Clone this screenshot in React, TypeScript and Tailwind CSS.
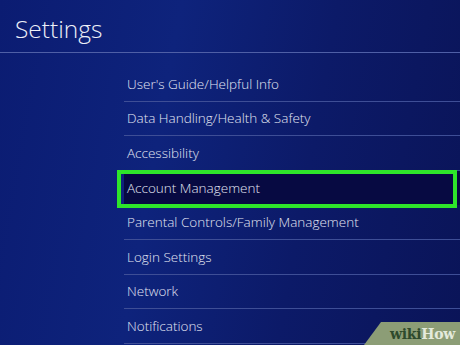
const items = [
  "User's Guide/Helpful Info",
  'Data Handling/Health & Safety',
  'Accessibility',
  'Account Management',
  'Parental Controls/Family Management',
  'Login Settings',
  'Network',
  'Notifications',
];

const selected = 'Account Management';

export default function App() {
  return (
    <div className="relative w-[460px] h-[345px] overflow-hidden bg-[linear-gradient(100deg,#0b1c72_0%,#0e237c_35%,#0c1a68_65%,#0a1458_100%)] font-['Open_Sans',sans-serif]">
      <header className="h-[53px] border-b border-[#4f5fa6] pl-[15px] pt-[14px]">
        <h1 className="text-[24.5px] leading-[30px] font-light text-[#eef0f8]">Settings</h1>
      </header>

      <ul className="ml-[124px] mt-[14px]">
        {items.map((item) => {
          const isSel = item === selected;
          return (
            <li
              key={item}
              className={`relative h-[34.6px] flex items-center pl-[3px] text-[13.5px] font-light text-[#e2e5f3] ${
                isSel ? 'bg-[#070a42]' : 'border-b border-[#3e4e96]'
              }`}
            >
              {item}
              {isSel && (
                <span className="pointer-events-none absolute -left-[7px] right-[3px] -top-[1px] -bottom-[3px] border-[4px] border-[#2ee62a]" />
              )}
            </li>
          );
        })}
      </ul>

      <div className="absolute right-0 bottom-0 w-[96px] h-[23px] bg-[#8c9d76] [clip-path:polygon(17px_0,100%_0,100%_100%,0_100%)] flex items-center justify-end pr-[5px] pt-[2px] font-['DejaVu_Serif',serif] font-bold text-[14px] tracking-[-0.3px]">
        <span className="text-[#2e4a2c]">wiki</span>
        <span className="text-[#e4eadc]">How</span>
      </div>
    </div>
  );
}
